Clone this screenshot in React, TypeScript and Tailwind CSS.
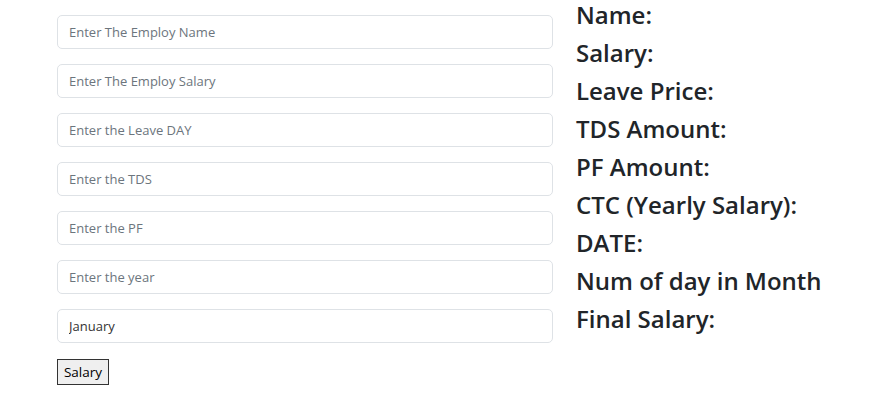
import React from 'react';

const fields = [
  'Enter The Employ Name',
  'Enter The Employ Salary',
  'Enter the Leave DAY',
  'Enter the TDS',
  'Enter the PF',
  'Enter the year',
];

const labels = [
  'Name:',
  'Salary:',
  'Leave Price:',
  'TDS Amount:',
  'PF Amount:',
  'CTC (Yearly Salary):',
  'DATE:',
  'Num of day in Month',
  'Final Salary:',
];

export default function App() {
  return (
    <div
      className="flex h-[407px] w-[872px] bg-white text-[#212529]"
      style={{ fontFamily: '"Open Sans", "Noto Sans", sans-serif' }}
    >
      {/* Form */}
      <div className="ml-[57px] mt-[15px] flex w-[496px] flex-col">
        {fields.map((f) => (
          <input
            key={f}
            type="text"
            placeholder={f}
            className="mb-[15px] h-[34px] w-full rounded-[5px] border border-[#dee2e6] px-[11px] text-[13px] text-[#212529] placeholder-[#6c757d] outline-none"
          />
        ))}
        <input
          type="text"
          defaultValue="January"
          className="mb-[16px] h-[34px] w-full rounded-[5px] border border-[#dee2e6] px-[11px] text-[13px] text-[#333] outline-none"
        />
        <button className="h-[26px] w-[52px] border-[1.5px] border-[#333] bg-[#efefef] text-[13.5px] text-black">
          Salary
        </button>
      </div>

      {/* Results */}
      <div className="ml-[23px] flex flex-col">
        {labels.map((l) => (
          <h4 key={l} className="mb-[8px] text-[24px] font-semibold leading-[30px] whitespace-nowrap">
            {l}
          </h4>
        ))}
      </div>
    </div>
  );
}
